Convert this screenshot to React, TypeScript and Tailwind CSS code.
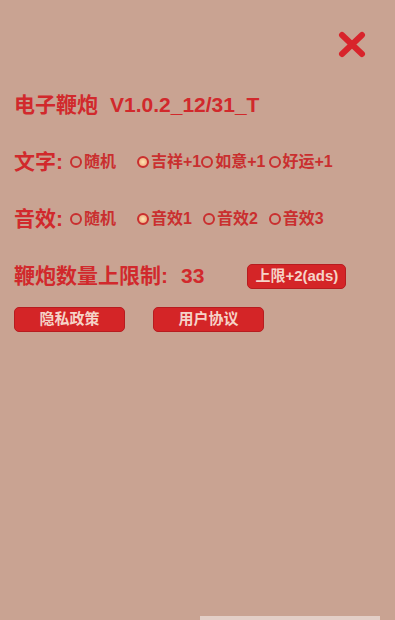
const font = { fontFamily: '"Liberation Sans", "Noto Sans CJK SC", sans-serif' };

const Radio = ({ on }: { on?: boolean }) => (
    <span
        className={
            'inline-block w-[12px] h-[12px] rounded-full border-[2px] border-[#c92f2f] shrink-0 ' +
            (on ? 'bg-[radial-gradient(circle,#fde6b4_0%,#f3bb8c_60%,#d66a5a_100%)]' : '')
        }
    />
);

const Option = ({ label, on, className = '' }: { label: string; on?: boolean; className?: string }) => (
    <span className={'flex items-center gap-[2px] ' + className}>
        <Radio on={on} />
        <span className="text-[16px] font-bold text-[#c92f2f]">{label}</span>
    </span>
);

const RedButton = ({ text, className = '' }: { text: string; className?: string }) => (
    <button
        className={
            'h-[25px] rounded-[5px] bg-[#d42527] border border-[#b71c1f] text-[#f5d3c8] font-bold flex items-center justify-center ' +
            className
        }
    >
        {text}
    </button>
);

export default function App() {
    return (
        <div className="w-[395px] h-[620px] bg-[#c9a392] flex flex-col relative overflow-hidden" style={font}>
            <div className="flex justify-end pt-[30px] pr-[28px] h-[58px]">
                <svg width="30" height="28" viewBox="0 0 30 28">
                    <path d="M5 5 L25 24 M25 5 L5 24" stroke="#d8242b" strokeWidth="6" strokeLinecap="round" />
                </svg>
            </div>

            <div className="pl-[14px] mt-[32px] h-[30px] flex items-center text-[21px] font-bold text-[#d1292c]">
                <span>电子鞭炮</span>
                <span className="ml-[12px]">V1.0.2_12/31_T</span>
            </div>

            <div className="pl-[14px] mt-[27px] h-[30px] flex items-center">
                <span className="text-[21px] font-bold text-[#d1292c] w-[56px]">文字:</span>
                <Option label="随机" />
                <Option label="吉祥+1" on className="ml-[21px]" />
                <Option label="如意+1" className="ml-[0px]" />
                <Option label="好运+1" className="ml-[3px]" />
            </div>

            <div className="pl-[14px] mt-[27px] h-[30px] flex items-center">
                <span className="text-[21px] font-bold text-[#d1292c] w-[56px]">音效:</span>
                <Option label="随机" />
                <Option label="音效1" on className="ml-[21px]" />
                <Option label="音效2" className="ml-[11px]" />
                <Option label="音效3" className="ml-[11px]" />
            </div>

            <div className="pl-[14px] mt-[27px] h-[30px] flex items-center">
                <span className="text-[21px] font-bold text-[#d1292c]">鞭炮数量上限制:</span>
                <span className="text-[21px] font-bold text-[#d1292c] ml-[13px]">33</span>
                <RedButton text="上限+2(ads)" className="ml-[43px] w-[99px] text-[15px]" />
            </div>

            <div className="pl-[14px] mt-[16px] h-[25px] flex items-center gap-[28px]">
                <RedButton text="隐私政策" className="w-[111px] text-[15px]" />
                <RedButton text="用户协议" className="w-[111px] text-[15px]" />
            </div>

            <div className="absolute left-[200px] bottom-0 w-[180px] h-[4px] bg-[#e3cfc7]" />
        </div>
    );
}
